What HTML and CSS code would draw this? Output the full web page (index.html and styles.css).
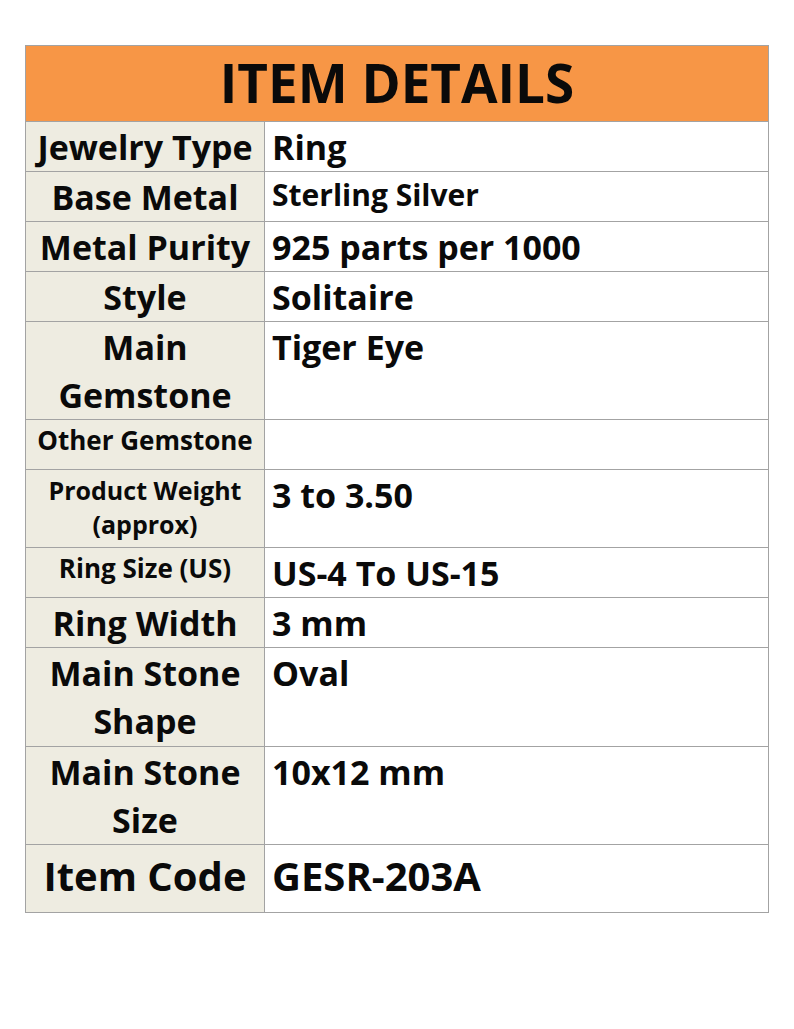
FILE: index.html
```html
<!DOCTYPE html>
<html>
<head>
<meta charset="utf-8">
<link rel="stylesheet" href="styles.css">
</head>
<body>
<table class="details">
  <colgroup><col class="c-label"><col class="c-value"></colgroup>
  <tr class="r-head"><th colspan="2" class="head">ITEM DETAILS</th></tr>
  <tr class="r50"><td class="lbl big">Jewelry Type</td><td class="val big">Ring</td></tr>
  <tr class="r50"><td class="lbl big">Base Metal</td><td class="val mid">Sterling Silver</td></tr>
  <tr class="r50"><td class="lbl big">Metal Purity</td><td class="val big">925 parts per 1000</td></tr>
  <tr class="r50"><td class="lbl big">Style</td><td class="val big">Solitaire</td></tr>
  <tr class="r98"><td class="lbl two">Main<br>Gemstone</td><td class="val big">Tiger Eye</td></tr>
  <tr class="r50"><td class="lbl small other">Other Gemstone</td><td class="val big"></td></tr>
  <tr class="r78"><td class="lbl small weight">Product Weight<br>(approx)</td><td class="val big">3 to 3.50</td></tr>
  <tr class="r50"><td class="lbl small size">Ring Size (US)</td><td class="val big">US-4 To US-15</td></tr>
  <tr class="r49"><td class="lbl big">Ring Width</td><td class="val big">3 mm</td></tr>
  <tr class="r99"><td class="lbl two">Main Stone<br>Shape</td><td class="val big">Oval</td></tr>
  <tr class="r98"><td class="lbl two">Main Stone<br>Size</td><td class="val big">10x12 mm</td></tr>
  <tr class="r68"><td class="lbl code">Item Code</td><td class="val code">GESR-203A</td></tr>
</table>
</body>
</html>
```

FILE: styles.css
```css
html, body {
  margin: 0;
  padding: 0;
  background: #ffffff;
}
body {
  font-family: "Open Sans", Lato, "Liberation Sans", sans-serif;
  font-weight: 700;
  color: #0a0a0a;
}
.details {
  margin: 45px 0 0 25px;
  width: 744px;
  border-collapse: collapse;
  table-layout: fixed;
}
.c-label { width: 239px; }
.details th, .details td {
  border: 1px solid #a3a3a3;
  padding: 0;
  vertical-align: top;
  white-space: nowrap;
}
.head {
  background: #f79646;
  font-size: 53px;
  line-height: 74px;
  text-align: center;
  font-weight: 700;
}
.r-head { height: 76px; }
.r50 { height: 50px; }
.r49 { height: 49px; }
.r68 { height: 68px; }
.r78 { height: 78px; }
.r98 { height: 98px; }
.r99 { height: 99px; }
.lbl {
  background: #eeece1;
  text-align: center;
}
.val {
  background: #ffffff;
  text-align: left;
  padding-left: 7px !important;
}
.big {
  font-size: 34px;
  line-height: 47px;
  padding-top: 2px !important;
}
.two {
  font-size: 34px;
  line-height: 48px;
  padding-top: 1px !important;
}
.mid {
  font-size: 30px;
  line-height: 46px;
}
.small {
  font-size: 26px;
}
.other { line-height: 40px; }
.weight { font-size: 25px; line-height: 34px; padding-top: 3px !important; }
.size { line-height: 40px; }
.code {
  font-size: 40px;
  line-height: 61px;
}
```
